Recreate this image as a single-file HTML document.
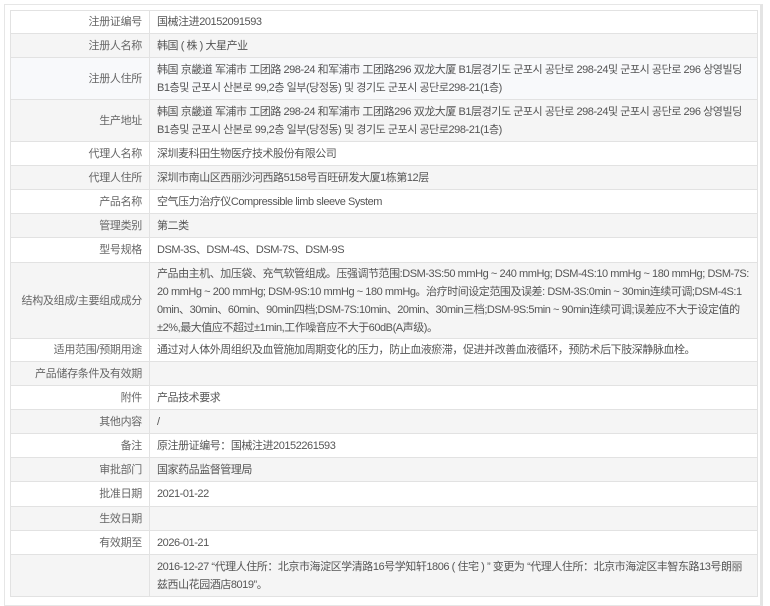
<!DOCTYPE html>
<html><head><meta charset="utf-8"><style>
body{margin:0;background:#fff;width:770px;height:593px;overflow:hidden;font-family:"Liberation Sans","Noto Sans CJK SC",sans-serif;font-size:11px;color:#555}
.wrap{position:absolute;left:4px;top:4px;width:755px;height:600px;border:1px solid #e6e6e6;border-right:3px solid #e4e4e4}
table{position:absolute;left:10px;top:10px;width:748px;border-collapse:collapse;table-layout:fixed}
td{border:1px solid #e2e2e2;padding:0 7px;line-height:18px;vertical-align:middle;white-space:nowrap;overflow:hidden;letter-spacing:-0.45px}
td.l{width:124px;text-align:right;color:#666;letter-spacing:-0.3px}
tr:nth-child(even) td{background:#f5f5f5}
tr.t td{background:#f8f9fb}
</style></head><body>
<div class="wrap"></div>
<table>
<tr style="height:23px"><td class="l">注册证编号</td><td>国械注进20152091593</td></tr>
<tr style="height:24px"><td class="l">注册人名称</td><td>韩国 ( 株 ) 大星产业</td></tr>
<tr class="t" style="height:42px"><td class="l">注册人住所</td><td>韩国 京畿道 军浦市 工团路 298-24 和军浦市 工团路296 双龙大厦 B1层경기도 군포시 공단로 298-24및 군포시 공단로 296 상영빌딩<br>B1층및 군포시 산본로 99,2층 일부(당정동) 및 경기도 군포시 공단로298-21(1층)</td></tr>
<tr style="height:42px"><td class="l">生产地址</td><td>韩国 京畿道 军浦市 工团路 298-24 和军浦市 工团路296 双龙大厦 B1层경기도 군포시 공단로 298-24및 군포시 공단로 296 상영빌딩<br>B1층및 군포시 산본로 99,2층 일부(당정동) 및 경기도 군포시 공단로298-21(1층)</td></tr>
<tr style="height:24px"><td class="l">代理人名称</td><td>深圳麦科田生物医疗技术股份有限公司</td></tr>
<tr style="height:24px"><td class="l">代理人住所</td><td>深圳市南山区西丽沙河西路5158号百旺研发大厦1栋第12层</td></tr>
<tr style="height:24px"><td class="l">产品名称</td><td>空气压力治疗仪Compressible limb sleeve System</td></tr>
<tr style="height:24px"><td class="l">管理类别</td><td>第二类</td></tr>
<tr style="height:25px"><td class="l">型号规格</td><td>DSM-3S、DSM-4S、DSM-7S、DSM-9S</td></tr>
<tr style="height:76px"><td class="l">结构及组成/主要组成成分</td><td>产品由主机、加压袋、充气软管组成。压强调节范围:DSM-3S:50 mmHg ~ 240 mmHg; DSM-4S:10 mmHg ~ 180 mmHg; DSM-7S:<br>20 mmHg ~ 200 mmHg; DSM-9S:10 mmHg ~ 180 mmHg。治疗时间设定范围及误差: DSM-3S:0min ~ 30min连续可调;DSM-4S:1<br>0min、30min、60min、90min四档;DSM-7S:10min、20min、30min三档;DSM-9S:5min ~ 90min连续可调;误差应不大于设定值的<br>±2%,最大值应不超过±1min,工作噪音应不大于60dB(A声级)。</td></tr>
<tr style="height:23px"><td class="l">适用范围/预期用途</td><td>通过对人体外周组织及血管施加周期变化的压力，防止血液瘀滞，促进并改善血液循环，预防术后下肢深静脉血栓。</td></tr>
<tr style="height:24px"><td class="l">产品储存条件及有效期</td><td></td></tr>
<tr style="height:24px"><td class="l">附件</td><td>产品技术要求</td></tr>
<tr style="height:24px"><td class="l">其他内容</td><td>/</td></tr>
<tr style="height:24px"><td class="l">备注</td><td>原注册证编号：国械注进20152261593</td></tr>
<tr style="height:24px"><td class="l">审批部门</td><td>国家药品监督管理局</td></tr>
<tr style="height:25px"><td class="l">批准日期</td><td>2021-01-22</td></tr>
<tr style="height:24px"><td class="l">生效日期</td><td></td></tr>
<tr style="height:24px"><td class="l">有效期至</td><td>2026-01-21</td></tr>
<tr style="height:42px"><td class="l"></td><td>2016-12-27 “代理人住所：北京市海淀区学清路16号学知轩1806 ( 住宅 ) ” 变更为 “代理人住所：北京市海淀区丰智东路13号朗丽<br>兹西山花园酒店8019”。</td></tr>
</table>
</body></html>
